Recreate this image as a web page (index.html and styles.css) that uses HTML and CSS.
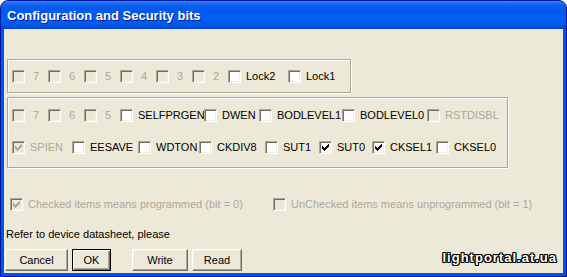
FILE: index.html
```html
<!DOCTYPE html>
<html>

<head>
    <meta charset="utf-8">
    <title>Configuration and Security bits</title>
    <link rel="stylesheet" href="styles.css">
</head>

<body>
    <div class="window">
        <div class="titlebar">Configuration and Security bits</div>

        <div class="client">
            <!-- lock bits -->
            <div class="group lock">
                <div class="row lock-row">
                    <span class="item dis"><span class="box"></span><span class="txt bit">7</span></span>
                    <span class="item dis"><span class="box"></span><span class="txt bit">6</span></span>
                    <span class="item dis"><span class="box"></span><span class="txt bit">5</span></span>
                    <span class="item dis"><span class="box"></span><span class="txt bit">4</span></span>
                    <span class="item dis"><span class="box"></span><span class="txt bit">3</span></span>
                    <span class="item dis"><span class="box"></span><span class="txt bit">2</span></span>
                    <span class="item"><span class="box"></span><span class="txt">Lock2</span></span>
                    <span class="item"><span class="box"></span><span class="txt">Lock1</span></span>
                </div>
            </div>

            <!-- fuse bits -->
            <div class="group fuse">
                <div class="row hi-row">
                    <span class="item dis"><span class="box"></span><span class="txt bit">7</span></span>
                    <span class="item dis"><span class="box"></span><span class="txt bit">6</span></span>
                    <span class="item dis"><span class="box"></span><span class="txt bit">5</span></span>
                    <span class="item"><span class="box"></span><span class="txt">SELFPRGEN</span></span>
                    <span class="item"><span class="box"></span><span class="txt">DWEN</span></span>
                    <span class="item"><span class="box"></span><span class="txt">BODLEVEL1</span></span>
                    <span class="item"><span class="box"></span><span class="txt">BODLEVEL0</span></span>
                    <span class="item dis"><span class="box"></span><span class="txt">RSTDISBL</span></span>
                </div>
                <div class="row lo-row">
                    <span class="item dis"><span class="box"><svg class="tick" viewBox="0 0 7 7"><polygon points="0,2 2,4 7,-1 7,2 2,7 0,5"/></svg></span><span class="txt">SPIEN</span></span>
                    <span class="item"><span class="box"></span><span class="txt">EESAVE</span></span>
                    <span class="item"><span class="box"></span><span class="txt">WDTON</span></span>
                    <span class="item"><span class="box"></span><span class="txt">CKDIV8</span></span>
                    <span class="item"><span class="box"></span><span class="txt">SUT1</span></span>
                    <span class="item"><span class="box"><svg class="tick" viewBox="0 0 7 7"><polygon points="0,2 2,4 7,-1 7,2 2,7 0,5"/></svg></span><span class="txt">SUT0</span></span>
                    <span class="item"><span class="box"><svg class="tick" viewBox="0 0 7 7"><polygon points="0,2 2,4 7,-1 7,2 2,7 0,5"/></svg></span><span class="txt">CKSEL1</span></span>
                    <span class="item"><span class="box"></span><span class="txt">CKSEL0</span></span>
                </div>
            </div>

            <div class="row legend">
                <span class="item dis"><span class="box"><svg class="tick" viewBox="0 0 7 7"><polygon points="0,2 2,4 7,-1 7,2 2,7 0,5"/></svg></span><span class="txt">Checked items means programmed (bit = 0)</span></span>
                <span class="item dis"><span class="box"></span><span class="txt">UnChecked items means unprogrammed (bit = 1)</span></span>
            </div>

            <div class="note">Refer to device datasheet, please</div>

            <div class="buttons">
                <button class="btn cancel">Cancel</button>
                <button class="btn ok default">OK</button>
                <button class="btn write">Write</button>
                <button class="btn read">Read</button>
            </div>

            <div class="watermark">lightportal.at.ua</div>
        </div>
    </div>
</body>

</html>
```

FILE: styles.css
```css
body {
    margin: 0;
    background: #fff;
    font-family: "Liberation Sans", Arial, sans-serif;
    font-size: 11px;
}

.window {
    width: 567px;
    height: 277px;
    box-sizing: border-box;
    display: flex;
    flex-direction: column;
    background: #0055e5;
    border: 1px solid #0019a3;
    border-radius: 8px 8px 0 0;
    overflow: hidden;
}

.titlebar {
    height: 28px;
    flex: none;
    padding-left: 6px;
    line-height: 30px;
    color: #fff;
    font-weight: bold;
    font-size: 13px;
    text-shadow: 1px 1px #0a1a8a;
    background: linear-gradient(to bottom,
        #3d8cf8 0, #1b6cf2 2px, #0a5eec 5px, #0058ee 10px,
        #0060f5 18px, #0058ea 23px, #004ad9 27px, #0040cc 28px);
}

.client {
    flex: 1;
    position: relative;
    margin: 0 3px 3px;
    background: #ece9d8;
    display: flex;
    flex-direction: column;
}

/* etched group boxes */
.group {
    box-sizing: border-box;
    margin-left: 3px;
    border: 1px solid #aca899;
    box-shadow: inset 1px 1px #fff, 1px 1px #fff;
    padding-left: 4px;
}

.lock {
    width: 344px;
    height: 34px;
    margin-top: 30px;
    display: flex;
    align-items: center;
}

.fuse {
    width: 501px;
    height: 71px;
    margin-top: 4px;
    padding-top: 11px;
    display: flex;
    flex-direction: column;
    gap: 19px;
}

.row {
    display: grid;
    height: 13px;
}

.lock-row {
    grid-template-columns: repeat(6, 36px) 60px auto;
}

.hi-row {
    grid-template-columns: 36px 36px 36px 84px 55px 83px 85px auto;
}

.lo-row {
    grid-template-columns: 60px 66px 61px 66px 54px 53px 64px auto;
}

.item {
    display: flex;
    align-items: center;
    height: 13px;
    overflow: hidden;
    white-space: nowrap;
}

.box {
    flex: none;
    width: 13px;
    height: 13px;
    box-sizing: border-box;
    display: flex;
    align-items: center;
    justify-content: center;
    background: #fff;
    border: 1px solid;
    border-color: #aca899 #fff #fff #aca899;
    box-shadow: inset 1px 1px #716f64, inset -1px -1px #f1efe2;
    color: #000;
}

.tick {
    width: 7px;
    height: 7px;
    fill: currentColor;
    shape-rendering: crispEdges;
}

.txt {
    margin-left: 5px;
    line-height: 13px;
}

.txt.bit {
    margin-left: 8px;
}

.dis .box {
    background: #ece9d8;
    color: #aca899;
}

.dis .txt {
    color: #aca899;
}

.legend {
    margin-top: 30px;
    margin-left: 6px;
    grid-template-columns: 263px auto;
}

.note {
    margin-top: 17px;
    margin-left: 2px;
    line-height: 13px;
}

.buttons {
    display: flex;
    gap: 4px;
    margin-top: 8px;
    margin-left: 1px;
}

.btn {
    height: 22px;
    padding: 0;
    font-family: "Liberation Sans", Arial, sans-serif;
    font-size: 11px;
    color: #000;
    background: #ece9d8;
    border: 1px solid;
    border-color: #fff #716f64 #716f64 #fff;
    box-shadow: inset -1px -1px #aca899, inset 1px 1px #f1efe2;
}

.btn.default {
    border-color: #000;
    box-shadow: inset 1px 1px #fff, inset -1px -1px #716f64, inset -2px -2px #aca899;
}

.cancel { width: 63px; }
.ok { width: 39px; }
.write { width: 56px; margin-left: 17px; }
.read { width: 50px; }

.watermark {
    position: absolute;
    right: 6px;
    bottom: 8px;
    color: #fff;
    font-weight: bold;
    font-size: 13px;
    letter-spacing: 1px;
    text-shadow: 1px 0 #000, -1px 0 #000, 0 1px #000, 0 -1px #000,
        1px 1px #000, -1px -1px #000, 1px -1px #000, -1px 1px #000;
}
```
